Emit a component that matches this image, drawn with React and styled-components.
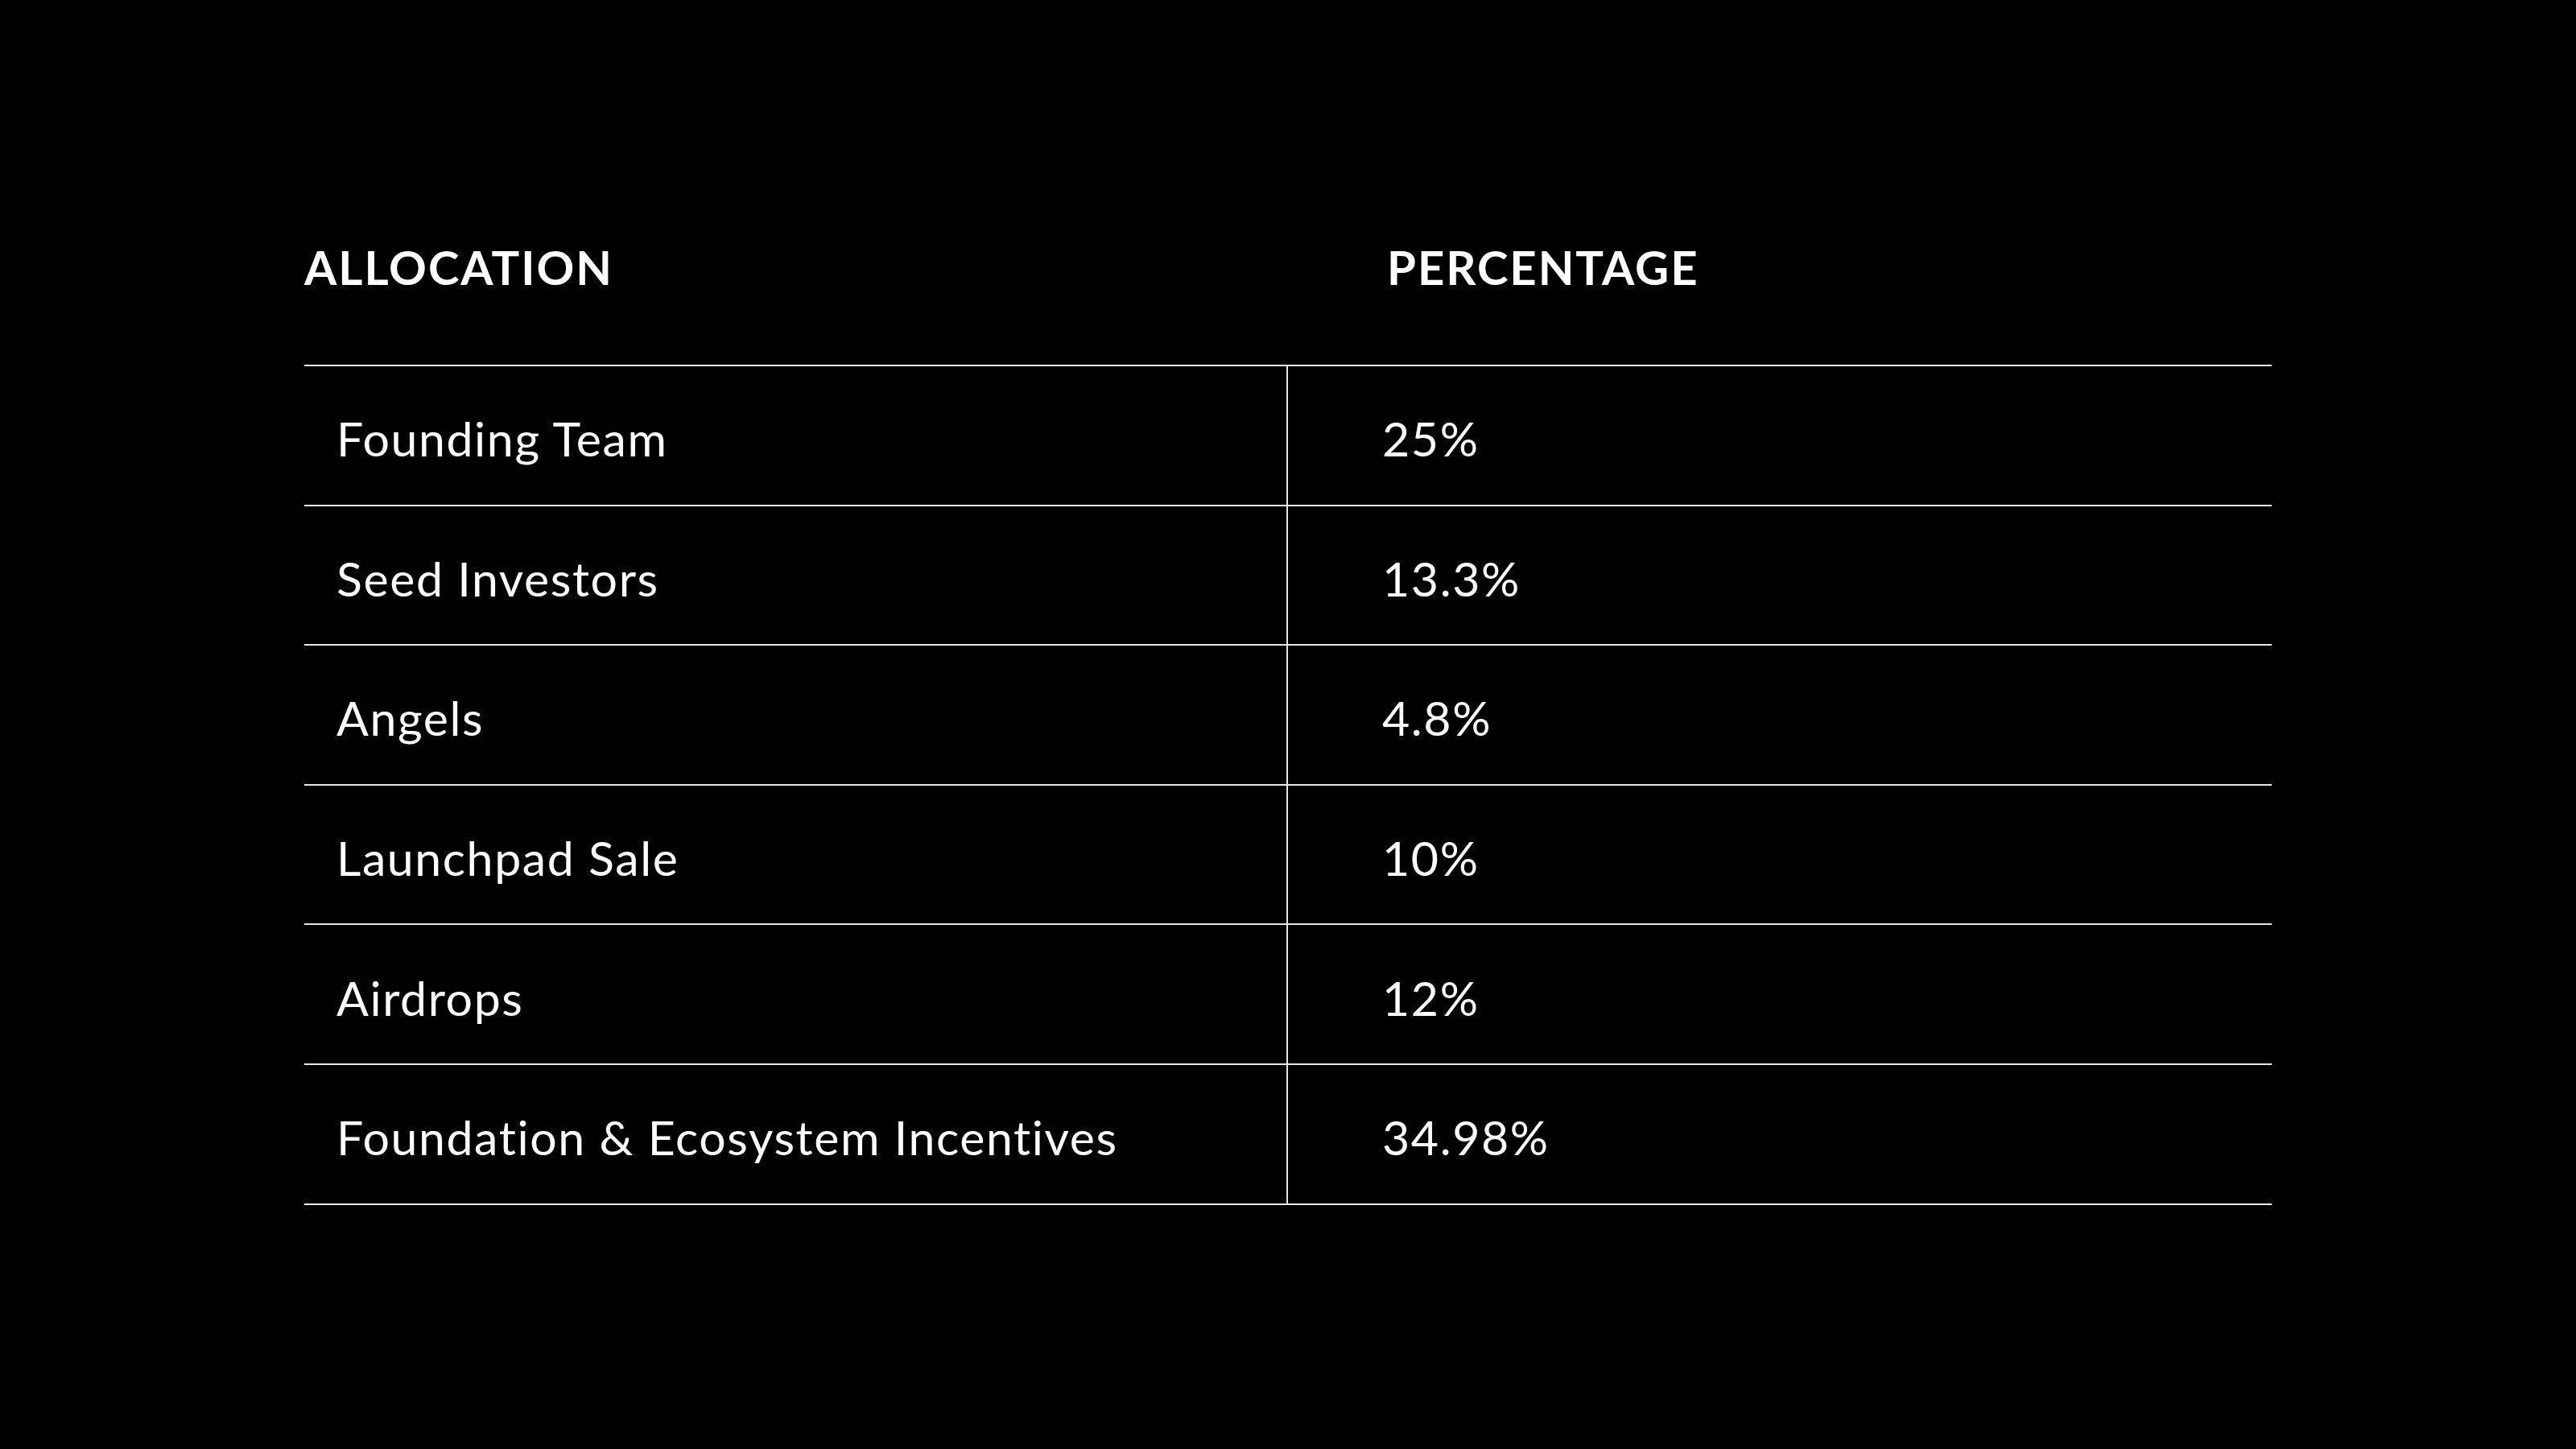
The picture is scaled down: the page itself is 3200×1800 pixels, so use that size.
import React from "react";
import styled, { createGlobalStyle } from "styled-components";

const Global = createGlobalStyle`
  html, body { margin: 0; padding: 0; background: #000; }
  body {
    font-family: Lato, "Liberation Sans", sans-serif;
    color: #fff;
    font-variant-ligatures: none;
  }
`;

const Page = styled.div`
  width: 3200px;
  height: 1800px;
  background: #000;
  display: flex;
  flex-direction: column;
  align-items: center;
  box-sizing: border-box;
  padding-top: 297px;
`;

const Table = styled.div`
  width: 2444px;
  display: flex;
  flex-direction: column;
`;

const HeaderRow = styled.div`
  display: grid;
  grid-template-columns: 1345px 1fr;
  height: 158px;
  border-bottom: 2px solid #e6e6e6;
  box-sizing: border-box;
`;

const HeadCell = styled.div`
  font-size: 58px;
  font-weight: 700;
  line-height: 70px;
  letter-spacing: 2px;
  color: #fff;
`;

const Row = styled.div`
  display: grid;
  grid-template-columns: 1220px 2px 1fr;
  height: 173.6px;
  box-sizing: border-box;
  border-bottom: 2px solid #e6e6e6;
`;

const Divider = styled.div`
  background: #e6e6e6;
`;

const Cell = styled.div`
  display: flex;
  align-items: center;
  padding-left: ${(p) => p.$pad}px;
  padding-top: 8px;
  font-size: 59px;
  font-weight: 400;
  letter-spacing: 1.6px;
  color: #fff;
`;

const rows = [
  ["Founding Team", "25%"],
  ["Seed Investors", "13.3%"],
  ["Angels", "4.8%"],
  ["Launchpad Sale", "10%"],
  ["Airdrops", "12%"],
  ["Foundation & Ecosystem Incentives", "34.98%"],
];

export default function App() {
  return (
    <>
      <Global />
      <Page>
        <Table>
          <HeaderRow>
            <HeadCell>ALLOCATION</HeadCell>
            <HeadCell>PERCENTAGE</HeadCell>
          </HeaderRow>
          {rows.map(([a, b]) => (
            <Row key={a}>
              <Cell $pad={40}>{a}</Cell>
              <Divider />
              <Cell $pad={117}>{b}</Cell>
            </Row>
          ))}
        </Table>
      </Page>
    </>
  );
}
